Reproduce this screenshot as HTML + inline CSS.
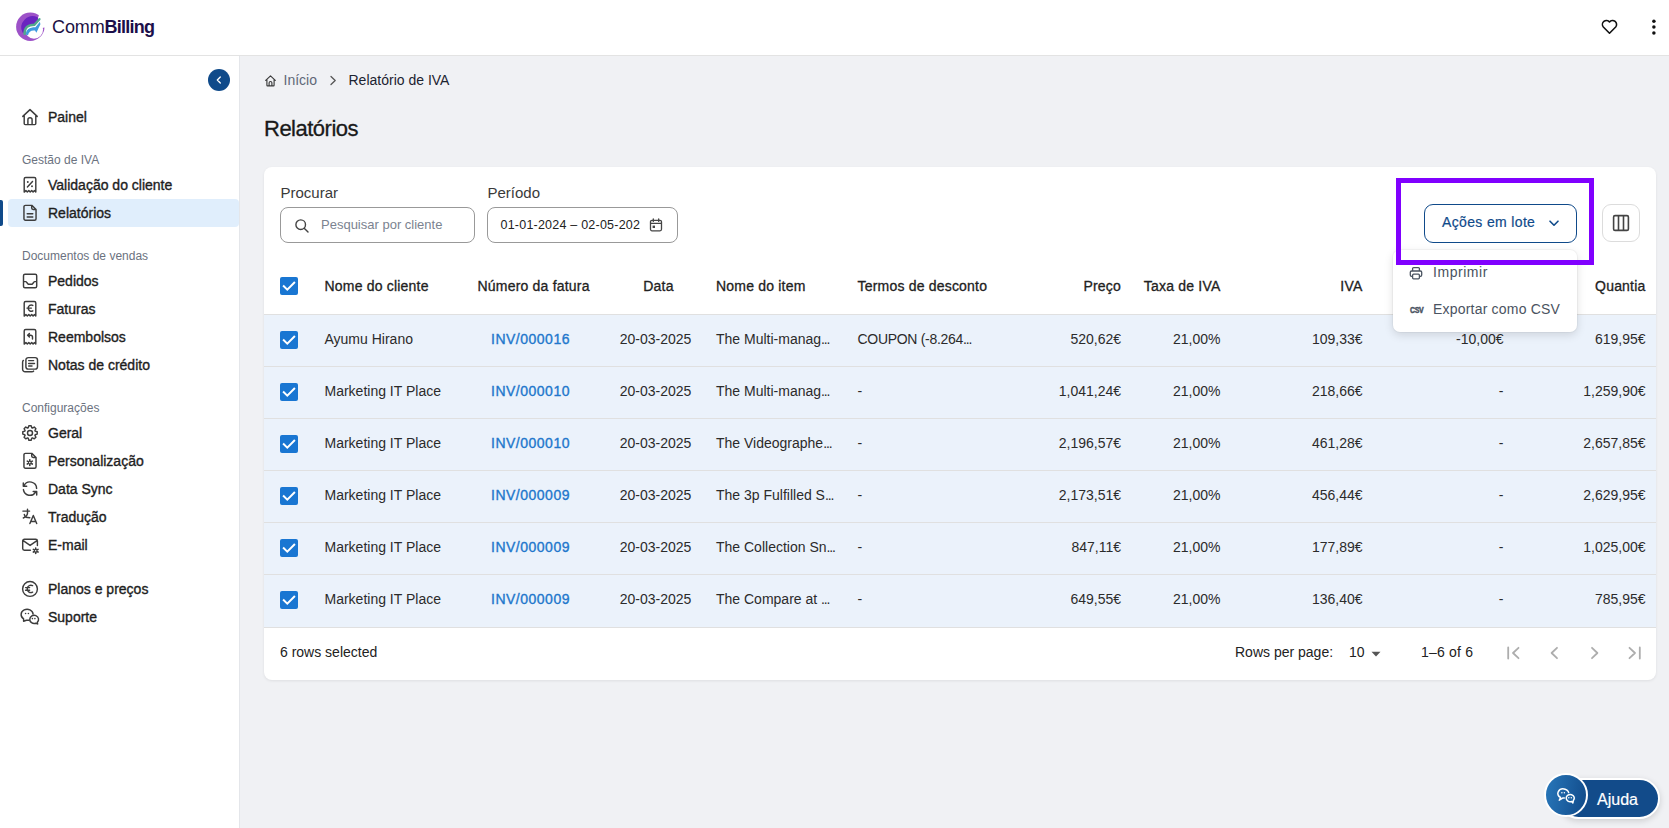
<!DOCTYPE html>
<html><head><meta charset="utf-8"><title>Relatórios</title>
<style>
*{margin:0;padding:0;box-sizing:border-box}
html,body{width:1669px;height:828px;overflow:hidden;background:#f0f1f4;font-family:'Liberation Sans',sans-serif;position:relative}
.a{position:absolute}
.t{position:absolute;white-space:nowrap;line-height:1}
svg.a{overflow:visible}
</style></head><body>
<div class="a" style="left:0px;top:0px;width:1669px;height:55px;background:#fff"></div>
<div class="a" style="left:0px;top:55px;width:1669px;height:1px;background:#e3e3e3"></div>
<svg class="a" style="left:14px;top:11px;" width="34" height="34" viewBox="0 0 34 34" fill="none">
<circle cx="16.3" cy="15.8" r="14.2" fill="#9d52c8"/>
<circle cx="20" cy="18.6" r="9.1" fill="#fff"/>
<path d="M24.9 4.3 L34 -1 L34 16.4 L30.6 16.4 L20 18.6 Z" fill="#fff"/>
<path d="M23.6 6.2 A11.45 11.45 0 0 0 8.6 21.8 L11 21.5 C11 16 14 13.7 20.4 13.7 L24.6 9 Z" fill="#6a24c0"/>
<path d="M11.8 23.5 C12 18.3 15.2 16.3 21.4 16.3 L25.9 10.8 L26.4 13.2 L22.4 21.8 L21 19.6 C17.4 19 14.8 20.4 14 24.3 Z" fill="#3f9be0"/>
<path d="M10.6 23 C10.4 16.5 14 13.7 20.4 13.7 L25.4 8.2" stroke="#52a88c" stroke-width="2.4" stroke-linecap="round"/>
</svg>
<div class="t" style="left:52px;top:17.5px;font-size:18px;color:#1d1244;letter-spacing:-0.1px">Comm<b style="font-weight:700;color:#1c0f4a;letter-spacing:-0.75px">Billing</b></div>
<svg class="a" style="left:1600px;top:17px;" width="19" height="19" viewBox="0 0 24 24" fill="none"><path d="M12 20.5 L4.2 12.7 A4.9 4.9 0 0 1 12 6.3 A4.9 4.9 0 0 1 19.8 12.7 Z" stroke="#111" stroke-width="2" stroke-linejoin="round"/></svg>
<svg class="a" style="left:1648px;top:15px;" width="12" height="24" viewBox="0 0 12 24" fill="none"><circle cx="5.9" cy="6.2" r="1.75" fill="#111"/><circle cx="5.9" cy="12" r="1.75" fill="#111"/><circle cx="5.9" cy="17.9" r="1.75" fill="#111"/></svg>
<div class="a" style="left:0px;top:56px;width:239px;height:772px;background:#fff"></div>
<div class="a" style="left:239px;top:56px;width:1px;height:772px;background:#e4e6ea"></div>
<div class="a" style="left:208px;top:69px;width:22px;height:22px;background:#0f4a8a;border-radius:50%"></div>
<svg class="a" style="left:213px;top:74px;" width="12" height="12" viewBox="0 0 12 12" fill="none"><path d="M7.3 3 L4.3 6 L7.3 9" stroke="#fff" stroke-width="1.3" stroke-linecap="round" stroke-linejoin="round"/></svg>
<div class="a" style="left:8px;top:199px;width:231px;height:28px;background:#e0eefc;border-radius:4px"></div>
<div class="a" style="left:0px;top:200px;width:3px;height:26px;background:#0f4a8a;border-radius:0 2px 2px 0"></div>
<svg class="a" style="left:20px;top:107px;" width="20" height="20" viewBox="0 0 20 20" fill="none"><path d="M2.8 9.4 L10 2.6 L17.2 9.4 M4.2 8.1 V16.6 Q4.2 17.6 5.2 17.6 H14.8 Q15.8 17.6 15.8 16.6 V8.1 M7.9 17.6 V12.8 A2.1 2.1 0 0 1 12.1 12.8 V17.6" stroke="#3d3d3d" stroke-width="1.45" stroke-linecap="round" stroke-linejoin="round" fill="none"/></svg>
<svg class="a" style="left:20px;top:175px;" width="20" height="20" viewBox="0 0 20 20" fill="none"><path d="M4.2 17.1 V4 Q4.2 2.5 5.7 2.5 H14.3 Q15.8 2.5 15.8 4 V17.1 L14.5 15.6 L13.1 17.1 L11.7 15.6 L10.2 17.1 L8.8 15.6 L7.3 17.1 L5.9 15.6 Z M7.4 12 L12.5 6.4" stroke="#3d3d3d" stroke-width="1.45" stroke-linecap="round" stroke-linejoin="round" fill="none"/><circle cx="7.8" cy="7" r="0.95" fill="#3d3d3d"/><circle cx="12" cy="11.2" r="0.95" fill="#3d3d3d"/></svg>
<svg class="a" style="left:20px;top:203px;" width="20" height="20" viewBox="0 0 20 20" fill="none"><path d="M5.4 2.35 H11.8 L16.05 6.6 V15.7 A1.45 1.45 0 0 1 14.6 17.15 H5.4 A1.45 1.45 0 0 1 3.95 15.7 V3.8 A1.45 1.45 0 0 1 5.4 2.35 Z M11.7 2.5 V5.1 A1.4 1.4 0 0 0 13.1 6.5 H15.9 M7.2 10.8 H12.8 M7.2 14 H12.8" stroke="#3d3d3d" stroke-width="1.45" stroke-linecap="round" stroke-linejoin="round" fill="none"/></svg>
<svg class="a" style="left:20px;top:271px;" width="20" height="20" viewBox="0 0 20 20" fill="none"><path d="M5 3.3 H15.2 A1.5 1.5 0 0 1 16.7 4.8 V15.2 A1.5 1.5 0 0 1 15.2 16.7 H5 A1.5 1.5 0 0 1 3.5 15.2 V4.8 A1.5 1.5 0 0 1 5 3.3 Z M3.6 10.6 H5.6 Q6.2 10.6 6.6 11.2 L7.8 12.7 Q8.3 13.3 9 13.3 H11.4 Q12.1 13.3 12.6 12.7 L13.8 11.2 Q14.2 10.6 14.8 10.6 H16.6" stroke="#3d3d3d" stroke-width="1.45" stroke-linecap="round" stroke-linejoin="round" fill="none"/></svg>
<svg class="a" style="left:20px;top:299px;" width="20" height="20" viewBox="0 0 20 20" fill="none"><path d="M4.2 17.1 V4 Q4.2 2.5 5.7 2.5 H14.3 Q15.8 2.5 15.8 4 V17.1 L14.5 15.6 L13.1 17.1 L11.7 15.6 L10.2 17.1 L8.8 15.6 L7.3 17.1 L5.9 15.6 Z M12.8 6.4 A3.1 3.1 0 1 0 12.8 11.8 M7 9.1 H11.4" stroke="#3d3d3d" stroke-width="1.45" stroke-linecap="round" stroke-linejoin="round" fill="none"/></svg>
<svg class="a" style="left:20px;top:327px;" width="20" height="20" viewBox="0 0 20 20" fill="none"><path d="M4.2 17.1 V4 Q4.2 2.5 5.7 2.5 H14.3 Q15.8 2.5 15.8 4 V17.1 L14.5 15.6 L13.1 17.1 L11.7 15.6 L10.2 17.1 L8.8 15.6 L7.3 17.1 L5.9 15.6 Z M12.5 11.9 V10.1 A1.9 1.9 0 0 0 10.6 8.2 H7.7 M9.4 6.5 L7.6 8.2 L9.4 9.9" stroke="#3d3d3d" stroke-width="1.45" stroke-linecap="round" stroke-linejoin="round" fill="none"/></svg>
<svg class="a" style="left:20px;top:355px;" width="20" height="20" viewBox="0 0 20 20" fill="none"><path d="M8.3 2.6 H15.1 A2.4 2.4 0 0 1 17.5 5 V11.7 A2.4 2.4 0 0 1 15.1 14.1 H8.3 A2.4 2.4 0 0 1 5.9 11.7 V5 A2.4 2.4 0 0 1 8.3 2.6 Z M3.4 5.4 Q2.6 6 2.6 7.2 V14.3 A2.5 2.5 0 0 0 5.1 16.8 H11.7 Q13.2 16.8 13.6 16.1 M8.7 5.6 H13.6 M8.7 8.4 H14.5 M8.7 10.9 H12" stroke="#3d3d3d" stroke-width="1.45" stroke-linecap="round" stroke-linejoin="round" fill="none"/></svg>
<svg class="a" style="left:20px;top:423px;" width="20" height="20" viewBox="0 0 20 20" fill="none"><path d="M8.21 4.75 L8.86 2.74 L11.14 2.74 L11.79 4.75 L12.41 5.01 L14.29 4.04 L15.91 5.66 L14.94 7.54 L15.20 8.16 L17.21 8.81 L17.21 11.09 L15.20 11.74 L14.94 12.36 L15.91 14.24 L14.29 15.86 L12.41 14.89 L11.79 15.15 L11.14 17.16 L8.86 17.16 L8.21 15.15 L7.59 14.89 L5.71 15.86 L4.09 14.24 L5.06 12.36 L4.80 11.74 L2.79 11.09 L2.79 8.81 L4.80 8.16 L5.06 7.54 L4.09 5.66 L5.71 4.04 L7.59 5.01 Z" stroke="#3d3d3d" stroke-width="1.45" stroke-linecap="round" stroke-linejoin="round" fill="none"/><circle cx="10" cy="9.95" r="2.5" stroke="#3d3d3d" stroke-width="1.45" stroke-linecap="round" stroke-linejoin="round" fill="none"/></svg>
<svg class="a" style="left:20px;top:451px;" width="20" height="20" viewBox="0 0 20 20" fill="none"><path d="M5.4 2.35 H11.8 L16.05 6.6 V15.7 A1.45 1.45 0 0 1 14.6 17.15 H5.4 A1.45 1.45 0 0 1 3.95 15.7 V3.8 A1.45 1.45 0 0 1 5.4 2.35 Z M11.7 2.5 V5.1 A1.4 1.4 0 0 0 13.1 6.5 H15.9" stroke="#3d3d3d" stroke-width="1.45" stroke-linecap="round" stroke-linejoin="round" fill="none"/><circle cx="9.8" cy="11.6" r="1.80" fill="#3d3d3d"/><path d="M9.80 14.50 L9.80 8.70 M7.29 13.05 L12.31 10.15 M7.29 10.15 L12.31 13.05 " stroke="#3d3d3d" stroke-width="1.6" stroke-linecap="round"/><circle cx="9.8" cy="11.6" r="0.78" fill="#fff"/></svg>
<svg class="a" style="left:20px;top:479px;" width="20" height="20" viewBox="0 0 20 20" fill="none"><path d="M16.6 9.4 A6.6 6.6 0 0 0 4.1 6.6 M3.3 3.9 V7.3 H6.7 M3.4 10.6 A6.6 6.6 0 0 0 15.6 13.1 M16.7 16 V12.4 H13.2" stroke="#3d3d3d" stroke-width="1.45" stroke-linecap="round" stroke-linejoin="round" fill="none"/></svg>
<svg class="a" style="left:20px;top:507px;" width="20" height="20" viewBox="0 0 20 20" fill="none"><path d="M2.9 4.1 H9.6 M7.5 2.2 V6.3 Q7.4 9 3.3 11 M4.3 7.4 Q4.5 9.3 6 10.2 Q7.6 10.6 9.8 10.7 M9.9 16.5 L13.3 8.5 L16.7 16.5 M11 14.5 H15.6" stroke="#3d3d3d" stroke-width="1.45" stroke-linecap="round" stroke-linejoin="round" fill="none"/></svg>
<svg class="a" style="left:20px;top:535px;" width="20" height="20" viewBox="0 0 20 20" fill="none"><path d="M17.4 10.4 V5.9 A1.7 1.7 0 0 0 15.7 4.2 H4.4 A1.7 1.7 0 0 0 2.7 5.9 V13.5 A1.7 1.7 0 0 0 4.4 15.2 H10.4 M3.2 5.6 L10.1 10.4 L17 5.6" stroke="#3d3d3d" stroke-width="1.45" stroke-linecap="round" stroke-linejoin="round" fill="none"/><circle cx="15.7" cy="15.7" r="1.67" fill="#3d3d3d"/><path d="M15.70 18.40 L15.70 13.00 M13.36 17.05 L18.04 14.35 M13.36 14.35 L18.04 17.05 " stroke="#3d3d3d" stroke-width="1.6" stroke-linecap="round"/><circle cx="15.7" cy="15.7" r="0.73" fill="#fff"/></svg>
<svg class="a" style="left:20px;top:579px;" width="20" height="20" viewBox="0 0 20 20" fill="none"><circle cx="10" cy="9.95" r="7.4" stroke="#3d3d3d" stroke-width="1.45" stroke-linecap="round" stroke-linejoin="round" fill="none"/><path d="M12.6 6.6 A3.7 3.7 0 1 0 12.6 13.2 M5.6 8.6 H9.6 M5.6 11.2 H9.6" stroke="#3d3d3d" stroke-width="1.45" stroke-linecap="round" stroke-linejoin="round" fill="none"/></svg>
<svg class="a" style="left:20px;top:607px;" width="20" height="20" viewBox="0 0 20 20" fill="none"><path d="M13.1 7.1 A6 5.3 0 1 0 3.6 11.8 V14.2 L6.4 13.2 H9.2" stroke="#3d3d3d" stroke-width="1.45" stroke-linecap="round" stroke-linejoin="round" fill="none"/><path d="M17.3 15.2 A4.4 4.1 0 1 0 15.6 16.2 L17.6 16.9 Z" stroke="#3d3d3d" stroke-width="1.45" stroke-linecap="round" stroke-linejoin="round" fill="none"/><circle cx="5.6" cy="6.5" r="0.8" fill="#3d3d3d"/><circle cx="8.4" cy="6.5" r="0.8" fill="#3d3d3d"/><circle cx="12.4" cy="11.6" r="0.8" fill="#3d3d3d"/><circle cx="14.9" cy="11.6" r="0.8" fill="#3d3d3d"/></svg>
<div class="t" style="top:110.10px;font-size:14px;color:#1e1e1e;-webkit-text-stroke:0.35px #1e1e1e;left:48px;">Painel</div>
<div class="t" style="top:153.80px;font-size:12px;color:#6b7280;left:22px;">Gestão de IVA</div>
<div class="t" style="top:178.10px;font-size:14px;color:#1e1e1e;-webkit-text-stroke:0.35px #1e1e1e;left:48px;">Validação do cliente</div>
<div class="t" style="top:206.10px;font-size:14px;color:#1e1e1e;-webkit-text-stroke:0.35px #1e1e1e;left:48px;">Relatórios</div>
<div class="t" style="top:250.10px;font-size:12px;color:#6b7280;left:22px;">Documentos de vendas</div>
<div class="t" style="top:274.10px;font-size:14px;color:#1e1e1e;-webkit-text-stroke:0.35px #1e1e1e;left:48px;">Pedidos</div>
<div class="t" style="top:302.10px;font-size:14px;color:#1e1e1e;-webkit-text-stroke:0.35px #1e1e1e;left:48px;">Faturas</div>
<div class="t" style="top:330.10px;font-size:14px;color:#1e1e1e;-webkit-text-stroke:0.35px #1e1e1e;left:48px;">Reembolsos</div>
<div class="t" style="top:358.10px;font-size:14px;color:#1e1e1e;-webkit-text-stroke:0.35px #1e1e1e;left:48px;">Notas de crédito</div>
<div class="t" style="top:402.40px;font-size:12px;color:#6b7280;left:22px;">Configurações</div>
<div class="t" style="top:426.10px;font-size:14px;color:#1e1e1e;-webkit-text-stroke:0.35px #1e1e1e;left:48px;">Geral</div>
<div class="t" style="top:454.10px;font-size:14px;color:#1e1e1e;-webkit-text-stroke:0.35px #1e1e1e;left:48px;">Personalização</div>
<div class="t" style="top:482.10px;font-size:14px;color:#1e1e1e;-webkit-text-stroke:0.35px #1e1e1e;left:48px;">Data Sync</div>
<div class="t" style="top:510.10px;font-size:14px;color:#1e1e1e;-webkit-text-stroke:0.35px #1e1e1e;left:48px;">Tradução</div>
<div class="t" style="top:538.10px;font-size:14px;color:#1e1e1e;-webkit-text-stroke:0.35px #1e1e1e;left:48px;">E-mail</div>
<div class="t" style="top:582.10px;font-size:14px;color:#1e1e1e;-webkit-text-stroke:0.35px #1e1e1e;left:48px;">Planos e preços</div>
<div class="t" style="top:610.10px;font-size:14px;color:#1e1e1e;-webkit-text-stroke:0.35px #1e1e1e;left:48px;">Suporte</div>
<svg class="a" style="left:264px;top:74px;" width="13" height="13" viewBox="0 0 13 13" fill="none"><path d="M1.7 6.3 L6.5 1.8 L11.3 6.3 M2.9 5.3 V11.3 Q2.9 11.9 3.5 11.9 H9.5 Q10.1 11.9 10.1 11.3 V5.3 M5.1 11.9 V8.9 A1.4 1.4 0 0 1 7.9 8.9 V11.9" stroke="#3a3a3a" stroke-width="1.15" stroke-linecap="round" stroke-linejoin="round"/></svg>
<div class="t" style="top:72.80px;font-size:14px;color:#5f6877;left:283.5px;">Início</div>
<svg class="a" style="left:329px;top:74.5px;" width="9" height="11" viewBox="0 0 9 11" fill="none"><path d="M2 1.5 L6.2 5.5 L2 9.5" stroke="#555" stroke-width="1.3" stroke-linecap="round" stroke-linejoin="round"/></svg>
<div class="t" style="top:72.80px;font-size:14px;color:#1c2330;left:348.5px;">Relatório de IVA</div>
<div class="t" style="top:118.10px;font-size:22px;color:#1a1a1a;-webkit-text-stroke:0.3px #1a1a1a;letter-spacing:-0.5px;left:264px;">Relatórios</div>
<div class="a" style="left:264px;top:167px;width:1392px;height:513px;background:#fff;border-radius:8px;box-shadow:0 1px 3px rgba(0,0,0,0.08)"></div>
<div class="t" style="top:185.25px;font-size:15px;color:#3a3a3a;left:280.5px;">Procurar</div>
<div class="t" style="top:185.25px;font-size:15px;color:#3a3a3a;left:487.5px;">Período</div>
<div class="a" style="left:280px;top:207px;width:195px;height:36px;border:1px solid #999;border-radius:8px"></div>
<svg class="a" style="left:294px;top:218px;" width="16" height="16" viewBox="0 0 16 16" fill="none"><circle cx="6.7" cy="6.7" r="4.8" stroke="#444" stroke-width="1.4"/><path d="M10.2 10.2 L14 14" stroke="#444" stroke-width="1.4" stroke-linecap="round"/></svg>
<div class="t" style="top:218.45px;font-size:13px;color:#7b8390;left:321px;">Pesquisar por cliente</div>
<div class="a" style="left:487px;top:207px;width:191px;height:36px;border:1px solid #999;border-radius:8px"></div>
<div class="t" style="top:218.88px;font-size:12.5px;color:#222;letter-spacing:0.22px;left:500.5px;">01-01-2024 – 02-05-202</div>
<svg class="a" style="left:649px;top:218px;" width="14" height="14" viewBox="0 0 14 14" fill="none"><rect x="1.5" y="2.3" width="11" height="10.5" rx="1.5" stroke="#444" stroke-width="1.3"/><path d="M1.6 5.4 H12.4 M4.3 1 V3.4 M9.7 1 V3.4" stroke="#444" stroke-width="1.3" stroke-linecap="round"/><rect x="3.6" y="7.6" width="2.4" height="2.4" fill="#444"/></svg>
<div class="a" style="left:1424px;top:204px;width:153px;height:39px;border:1px solid #0f4a8a;border-radius:9px"></div>
<div class="t" style="top:215.10px;font-size:14px;color:#0f4a8a;-webkit-text-stroke:0.2px #0f4a8a;letter-spacing:0.35px;left:1442px;">Ações em lote</div>
<svg class="a" style="left:1548px;top:219px;" width="12" height="9" viewBox="0 0 12 9" fill="none"><path d="M2 2.2 L6 6.2 L10 2.2" stroke="#0f4a8a" stroke-width="1.6" stroke-linecap="round" stroke-linejoin="round"/></svg>
<div class="a" style="left:1602px;top:204px;width:38px;height:38px;border:1px solid #dcdcdc;border-radius:9px"></div>
<svg class="a" style="left:1612px;top:214px;" width="18" height="18" viewBox="0 0 18 18" fill="none"><rect x="1.6" y="1.6" width="14.8" height="14.8" rx="1.4" stroke="#444" stroke-width="1.6"/><path d="M6.5 1.8 V16.2 M11.5 1.8 V16.2" stroke="#444" stroke-width="1.6"/></svg>
<div class="a" style="left:280px;top:277px;width:18px;height:18px;background:#1976d2;border-radius:2px"></div>
<svg class="a" style="left:280px;top:277px;" width="18" height="18" viewBox="0 0 18 18" fill="none"><path d="M3.8 9.2 L7.3 12.6 L14.2 5.7" stroke="#fff" stroke-width="2" stroke-linecap="square" stroke-linejoin="miter" fill="none"/></svg>
<div class="t" style="top:279.10px;font-size:14px;color:#222;-webkit-text-stroke:0.3px #222;letter-spacing:0.2px;left:324.5px;">Nome do cliente</div>
<div class="t" style="top:279.10px;font-size:14px;color:#222;-webkit-text-stroke:0.3px #222;letter-spacing:0.2px;left:477.5px;">Número da fatura</div>
<div class="t" style="top:279.10px;font-size:14px;color:#222;-webkit-text-stroke:0.3px #222;letter-spacing:0.2px;left:358.5px;width:600px;text-align:center;">Data</div>
<div class="t" style="top:279.10px;font-size:14px;color:#222;-webkit-text-stroke:0.3px #222;letter-spacing:0.2px;left:716px;">Nome do item</div>
<div class="t" style="top:279.10px;font-size:14px;color:#222;-webkit-text-stroke:0.3px #222;letter-spacing:0.2px;left:857.5px;">Termos de desconto</div>
<div class="t" style="top:279.10px;font-size:14px;color:#222;-webkit-text-stroke:0.3px #222;letter-spacing:0.2px;right:548px;">Preço</div>
<div class="t" style="top:279.10px;font-size:14px;color:#222;-webkit-text-stroke:0.3px #222;letter-spacing:0.2px;right:448.5px;">Taxa de IVA</div>
<div class="t" style="top:279.10px;font-size:14px;color:#222;-webkit-text-stroke:0.3px #222;letter-spacing:0.2px;right:306.5px;">IVA</div>
<div class="t" style="top:279.10px;font-size:14px;color:#222;-webkit-text-stroke:0.3px #222;letter-spacing:0.2px;right:165.5px;">Desconto</div>
<div class="t" style="top:279.10px;font-size:14px;color:#222;-webkit-text-stroke:0.3px #222;letter-spacing:0.2px;right:23.5px;">Quantia</div>
<div class="a" style="left:264px;top:314px;width:1392px;height:1px;background:#e0e0e0"></div>
<div class="a" style="left:264px;top:315px;width:1392px;height:51px;background:#ebf2fb"></div>
<div class="a" style="left:264px;top:366px;width:1392px;height:1px;background:#e0e0e0"></div>
<div class="a" style="left:280px;top:331px;width:18px;height:18px;background:#1976d2;border-radius:2px"></div>
<svg class="a" style="left:280px;top:331px;" width="18" height="18" viewBox="0 0 18 18" fill="none"><path d="M3.8 9.2 L7.3 12.6 L14.2 5.7" stroke="#fff" stroke-width="2" stroke-linecap="square" stroke-linejoin="miter" fill="none"/></svg>
<div class="t" style="top:332.10px;font-size:14px;color:#2b2b2b;left:324.5px;">Ayumu Hirano</div>
<div class="t" style="top:332.10px;font-size:14px;color:#2277cc;-webkit-text-stroke:0.35px #2277cc;letter-spacing:0.5px;left:230.5px;width:600px;text-align:center;">INV/000016</div>
<div class="t" style="top:332.10px;font-size:14px;color:#2b2b2b;left:355.5px;width:600px;text-align:center;">20-03-2025</div>
<div class="t" style="top:332.10px;font-size:14px;color:#2b2b2b;left:716px;">The Multi-manag<span style="letter-spacing:-1.15px">...</span></div>
<div class="t" style="top:332.10px;font-size:14px;color:#2b2b2b;letter-spacing:-0.3px;left:857.5px;">COUPON (-8.264<span style="letter-spacing:-1.15px">...</span></div>
<div class="t" style="top:332.10px;font-size:14px;color:#2b2b2b;right:548px;">520,62€</div>
<div class="t" style="top:332.10px;font-size:14px;color:#2b2b2b;right:448.5px;">21,00%</div>
<div class="t" style="top:332.10px;font-size:14px;color:#2b2b2b;right:306.5px;">109,33€</div>
<div class="t" style="top:332.10px;font-size:14px;color:#2b2b2b;right:165.5px;">-10,00€</div>
<div class="t" style="top:332.10px;font-size:14px;color:#2b2b2b;right:23.5px;">619,95€</div>
<div class="a" style="left:264px;top:367px;width:1392px;height:51px;background:#ebf2fb"></div>
<div class="a" style="left:264px;top:418px;width:1392px;height:1px;background:#e0e0e0"></div>
<div class="a" style="left:280px;top:383px;width:18px;height:18px;background:#1976d2;border-radius:2px"></div>
<svg class="a" style="left:280px;top:383px;" width="18" height="18" viewBox="0 0 18 18" fill="none"><path d="M3.8 9.2 L7.3 12.6 L14.2 5.7" stroke="#fff" stroke-width="2" stroke-linecap="square" stroke-linejoin="miter" fill="none"/></svg>
<div class="t" style="top:384.10px;font-size:14px;color:#2b2b2b;left:324.5px;">Marketing IT Place</div>
<div class="t" style="top:384.10px;font-size:14px;color:#2277cc;-webkit-text-stroke:0.35px #2277cc;letter-spacing:0.5px;left:230.5px;width:600px;text-align:center;">INV/000010</div>
<div class="t" style="top:384.10px;font-size:14px;color:#2b2b2b;left:355.5px;width:600px;text-align:center;">20-03-2025</div>
<div class="t" style="top:384.10px;font-size:14px;color:#2b2b2b;left:716px;">The Multi-manag<span style="letter-spacing:-1.15px">...</span></div>
<div class="t" style="top:384.10px;font-size:14px;color:#2b2b2b;left:857.5px;">-</div>
<div class="t" style="top:384.10px;font-size:14px;color:#2b2b2b;right:548px;">1,041,24€</div>
<div class="t" style="top:384.10px;font-size:14px;color:#2b2b2b;right:448.5px;">21,00%</div>
<div class="t" style="top:384.10px;font-size:14px;color:#2b2b2b;right:306.5px;">218,66€</div>
<div class="t" style="top:384.10px;font-size:14px;color:#2b2b2b;right:165.5px;">-</div>
<div class="t" style="top:384.10px;font-size:14px;color:#2b2b2b;right:23.5px;">1,259,90€</div>
<div class="a" style="left:264px;top:419px;width:1392px;height:51px;background:#ebf2fb"></div>
<div class="a" style="left:264px;top:470px;width:1392px;height:1px;background:#e0e0e0"></div>
<div class="a" style="left:280px;top:435px;width:18px;height:18px;background:#1976d2;border-radius:2px"></div>
<svg class="a" style="left:280px;top:435px;" width="18" height="18" viewBox="0 0 18 18" fill="none"><path d="M3.8 9.2 L7.3 12.6 L14.2 5.7" stroke="#fff" stroke-width="2" stroke-linecap="square" stroke-linejoin="miter" fill="none"/></svg>
<div class="t" style="top:436.10px;font-size:14px;color:#2b2b2b;left:324.5px;">Marketing IT Place</div>
<div class="t" style="top:436.10px;font-size:14px;color:#2277cc;-webkit-text-stroke:0.35px #2277cc;letter-spacing:0.5px;left:230.5px;width:600px;text-align:center;">INV/000010</div>
<div class="t" style="top:436.10px;font-size:14px;color:#2b2b2b;left:355.5px;width:600px;text-align:center;">20-03-2025</div>
<div class="t" style="top:436.10px;font-size:14px;color:#2b2b2b;left:716px;">The Videographe<span style="letter-spacing:-1.15px">...</span></div>
<div class="t" style="top:436.10px;font-size:14px;color:#2b2b2b;left:857.5px;">-</div>
<div class="t" style="top:436.10px;font-size:14px;color:#2b2b2b;right:548px;">2,196,57€</div>
<div class="t" style="top:436.10px;font-size:14px;color:#2b2b2b;right:448.5px;">21,00%</div>
<div class="t" style="top:436.10px;font-size:14px;color:#2b2b2b;right:306.5px;">461,28€</div>
<div class="t" style="top:436.10px;font-size:14px;color:#2b2b2b;right:165.5px;">-</div>
<div class="t" style="top:436.10px;font-size:14px;color:#2b2b2b;right:23.5px;">2,657,85€</div>
<div class="a" style="left:264px;top:471px;width:1392px;height:51px;background:#ebf2fb"></div>
<div class="a" style="left:264px;top:522px;width:1392px;height:1px;background:#e0e0e0"></div>
<div class="a" style="left:280px;top:487px;width:18px;height:18px;background:#1976d2;border-radius:2px"></div>
<svg class="a" style="left:280px;top:487px;" width="18" height="18" viewBox="0 0 18 18" fill="none"><path d="M3.8 9.2 L7.3 12.6 L14.2 5.7" stroke="#fff" stroke-width="2" stroke-linecap="square" stroke-linejoin="miter" fill="none"/></svg>
<div class="t" style="top:488.10px;font-size:14px;color:#2b2b2b;left:324.5px;">Marketing IT Place</div>
<div class="t" style="top:488.10px;font-size:14px;color:#2277cc;-webkit-text-stroke:0.35px #2277cc;letter-spacing:0.5px;left:230.5px;width:600px;text-align:center;">INV/000009</div>
<div class="t" style="top:488.10px;font-size:14px;color:#2b2b2b;left:355.5px;width:600px;text-align:center;">20-03-2025</div>
<div class="t" style="top:488.10px;font-size:14px;color:#2b2b2b;left:716px;">The 3p Fulfilled S<span style="letter-spacing:-1.15px">...</span></div>
<div class="t" style="top:488.10px;font-size:14px;color:#2b2b2b;left:857.5px;">-</div>
<div class="t" style="top:488.10px;font-size:14px;color:#2b2b2b;right:548px;">2,173,51€</div>
<div class="t" style="top:488.10px;font-size:14px;color:#2b2b2b;right:448.5px;">21,00%</div>
<div class="t" style="top:488.10px;font-size:14px;color:#2b2b2b;right:306.5px;">456,44€</div>
<div class="t" style="top:488.10px;font-size:14px;color:#2b2b2b;right:165.5px;">-</div>
<div class="t" style="top:488.10px;font-size:14px;color:#2b2b2b;right:23.5px;">2,629,95€</div>
<div class="a" style="left:264px;top:523px;width:1392px;height:51px;background:#ebf2fb"></div>
<div class="a" style="left:264px;top:574px;width:1392px;height:1px;background:#e0e0e0"></div>
<div class="a" style="left:280px;top:539px;width:18px;height:18px;background:#1976d2;border-radius:2px"></div>
<svg class="a" style="left:280px;top:539px;" width="18" height="18" viewBox="0 0 18 18" fill="none"><path d="M3.8 9.2 L7.3 12.6 L14.2 5.7" stroke="#fff" stroke-width="2" stroke-linecap="square" stroke-linejoin="miter" fill="none"/></svg>
<div class="t" style="top:540.10px;font-size:14px;color:#2b2b2b;left:324.5px;">Marketing IT Place</div>
<div class="t" style="top:540.10px;font-size:14px;color:#2277cc;-webkit-text-stroke:0.35px #2277cc;letter-spacing:0.5px;left:230.5px;width:600px;text-align:center;">INV/000009</div>
<div class="t" style="top:540.10px;font-size:14px;color:#2b2b2b;left:355.5px;width:600px;text-align:center;">20-03-2025</div>
<div class="t" style="top:540.10px;font-size:14px;color:#2b2b2b;left:716px;">The Collection Sn<span style="letter-spacing:-1.15px">...</span></div>
<div class="t" style="top:540.10px;font-size:14px;color:#2b2b2b;left:857.5px;">-</div>
<div class="t" style="top:540.10px;font-size:14px;color:#2b2b2b;right:548px;">847,11€</div>
<div class="t" style="top:540.10px;font-size:14px;color:#2b2b2b;right:448.5px;">21,00%</div>
<div class="t" style="top:540.10px;font-size:14px;color:#2b2b2b;right:306.5px;">177,89€</div>
<div class="t" style="top:540.10px;font-size:14px;color:#2b2b2b;right:165.5px;">-</div>
<div class="t" style="top:540.10px;font-size:14px;color:#2b2b2b;right:23.5px;">1,025,00€</div>
<div class="a" style="left:264px;top:575px;width:1392px;height:52px;background:#ebf2fb"></div>
<div class="a" style="left:264px;top:627px;width:1392px;height:1px;background:#e0e0e0"></div>
<div class="a" style="left:280px;top:591px;width:18px;height:18px;background:#1976d2;border-radius:2px"></div>
<svg class="a" style="left:280px;top:591px;" width="18" height="18" viewBox="0 0 18 18" fill="none"><path d="M3.8 9.2 L7.3 12.6 L14.2 5.7" stroke="#fff" stroke-width="2" stroke-linecap="square" stroke-linejoin="miter" fill="none"/></svg>
<div class="t" style="top:592.10px;font-size:14px;color:#2b2b2b;left:324.5px;">Marketing IT Place</div>
<div class="t" style="top:592.10px;font-size:14px;color:#2277cc;-webkit-text-stroke:0.35px #2277cc;letter-spacing:0.5px;left:230.5px;width:600px;text-align:center;">INV/000009</div>
<div class="t" style="top:592.10px;font-size:14px;color:#2b2b2b;left:355.5px;width:600px;text-align:center;">20-03-2025</div>
<div class="t" style="top:592.10px;font-size:14px;color:#2b2b2b;left:716px;">The Compare at <span style="letter-spacing:-1.15px">...</span></div>
<div class="t" style="top:592.10px;font-size:14px;color:#2b2b2b;left:857.5px;">-</div>
<div class="t" style="top:592.10px;font-size:14px;color:#2b2b2b;right:548px;">649,55€</div>
<div class="t" style="top:592.10px;font-size:14px;color:#2b2b2b;right:448.5px;">21,00%</div>
<div class="t" style="top:592.10px;font-size:14px;color:#2b2b2b;right:306.5px;">136,40€</div>
<div class="t" style="top:592.10px;font-size:14px;color:#2b2b2b;right:165.5px;">-</div>
<div class="t" style="top:592.10px;font-size:14px;color:#2b2b2b;right:23.5px;">785,95€</div>
<div class="t" style="top:645.10px;font-size:14px;color:#222;left:280px;">6 rows selected</div>
<div class="t" style="top:645.30px;font-size:14px;color:#222;left:1235px;">Rows per page:</div>
<div class="t" style="top:645.30px;font-size:14px;color:#222;left:1349px;">10</div>
<svg class="a" style="left:1370px;top:651px;" width="12" height="6" viewBox="0 0 12 6" fill="none"><path d="M1.5 0.8 H10.5 L6 5.5 Z" fill="#555"/></svg>
<div class="t" style="top:645.30px;font-size:14px;color:#222;letter-spacing:0.2px;left:1421px;">1–6 of 6</div>
<svg class="a" style="left:1506px;top:645px;" width="16" height="16" viewBox="0 0 16 16" fill="none"><path d="M2.2 2.5 V13.5 M12.5 2.8 L7 8 L12.5 13.2" stroke="#adadad" stroke-width="1.8" stroke-linecap="round" stroke-linejoin="round"/></svg>
<svg class="a" style="left:1546px;top:645px;" width="16" height="16" viewBox="0 0 16 16" fill="none"><path d="M11 2.8 L5.6 8 L11 13.2" stroke="#adadad" stroke-width="1.8" stroke-linecap="round" stroke-linejoin="round"/></svg>
<svg class="a" style="left:1587px;top:645px;" width="16" height="16" viewBox="0 0 16 16" fill="none"><path d="M5 2.8 L10.4 8 L5 13.2" stroke="#adadad" stroke-width="1.8" stroke-linecap="round" stroke-linejoin="round"/></svg>
<svg class="a" style="left:1626px;top:645px;" width="16" height="16" viewBox="0 0 16 16" fill="none"><path d="M13.8 2.5 V13.5 M3.5 2.8 L9 8 L3.5 13.2" stroke="#adadad" stroke-width="1.8" stroke-linecap="round" stroke-linejoin="round"/></svg>
<div class="a" style="left:1393px;top:250px;width:184px;height:82px;background:#fff;border-radius:7px;box-shadow:0 3px 10px rgba(0,0,0,0.13),0 0 0 1px rgba(0,0,0,0.03)"></div>
<svg class="a" style="left:1409px;top:266px;" width="14" height="14" viewBox="0 0 14 14" fill="none"><path d="M3.6 5 V2.6 A1 1 0 0 1 4.6 1.6 H9.4 A1 1 0 0 1 10.4 2.6 V5 M3.6 10.4 H2.6 A1.3 1.3 0 0 1 1.3 9.1 V6.3 A1.3 1.3 0 0 1 2.6 5 H11.4 A1.3 1.3 0 0 1 12.7 6.3 V9.1 A1.3 1.3 0 0 1 11.4 10.4 H10.4 M4.6 8.2 H9.4 A1 1 0 0 1 10.4 9.2 V11.8 A1 1 0 0 1 9.4 12.8 H4.6 A1 1 0 0 1 3.6 11.8 V9.2 A1 1 0 0 1 4.6 8.2 Z" stroke="#4a5361" stroke-width="1.3"/></svg>
<div class="t" style="top:264.90px;font-size:14px;color:#4a5361;letter-spacing:0.55px;left:1433px;">Imprimir</div>
<div class="t" style="left:1409.5px;top:306px;font-size:9px;font-weight:700;color:#4a5361;-webkit-text-stroke:0.5px #4a5361;letter-spacing:-0.5px;transform:scaleX(0.78);transform-origin:left">CSV</div>
<div class="t" style="top:302.10px;font-size:14px;color:#4a5361;letter-spacing:0.2px;left:1433px;">Exportar como CSV</div>
<div class="a" style="left:1396px;top:178px;width:198px;height:87px;border:5px solid #8000ff"></div>
<div class="a" style="left:1558px;top:778px;width:102px;height:41px;background:#124b8a;border:2px solid #fff;border-radius:21px;box-shadow:0 2px 6px rgba(0,0,0,0.15)"></div>
<div class="a" style="left:1544px;top:773px;width:44px;height:44px;background:linear-gradient(100deg,#2877ba,#114a89);border:2px solid #fff;border-radius:50%"></div>
<svg class="a" style="left:1550px;top:782px;" width="30" height="26" viewBox="0 0 30 26" fill="none"><path d="M18.61 12.69 A5.5 4.6 0 1 0 10.55 15.48 L9.3 18.2 L12.6 16.1 L15.2 16" stroke="#fff" stroke-width="1.5" stroke-linejoin="round" stroke-linecap="round"/><ellipse cx="20.25" cy="16.1" rx="4.05" ry="3.65" fill="#1c63a3" stroke="#1c63a3" stroke-width="3"/><path d="M21.64 19.53 A4.05 3.65 0 1 1 23.35 18.45 L22.9 20.9 Z" fill="#1c63a3" stroke="#fff" stroke-width="1.5" stroke-linejoin="round"/><circle cx="11.9" cy="10.8" r="0.75" fill="#fff"/><circle cx="14.4" cy="10.8" r="0.75" fill="#fff"/><circle cx="18.8" cy="15.8" r="0.75" fill="#fff"/><circle cx="21.3" cy="15.8" r="0.75" fill="#fff"/></svg>
<div class="t" style="top:791.90px;font-size:16px;color:#fff;-webkit-text-stroke:0.2px #fff;left:1597px;">Ajuda</div>
</body></html>
